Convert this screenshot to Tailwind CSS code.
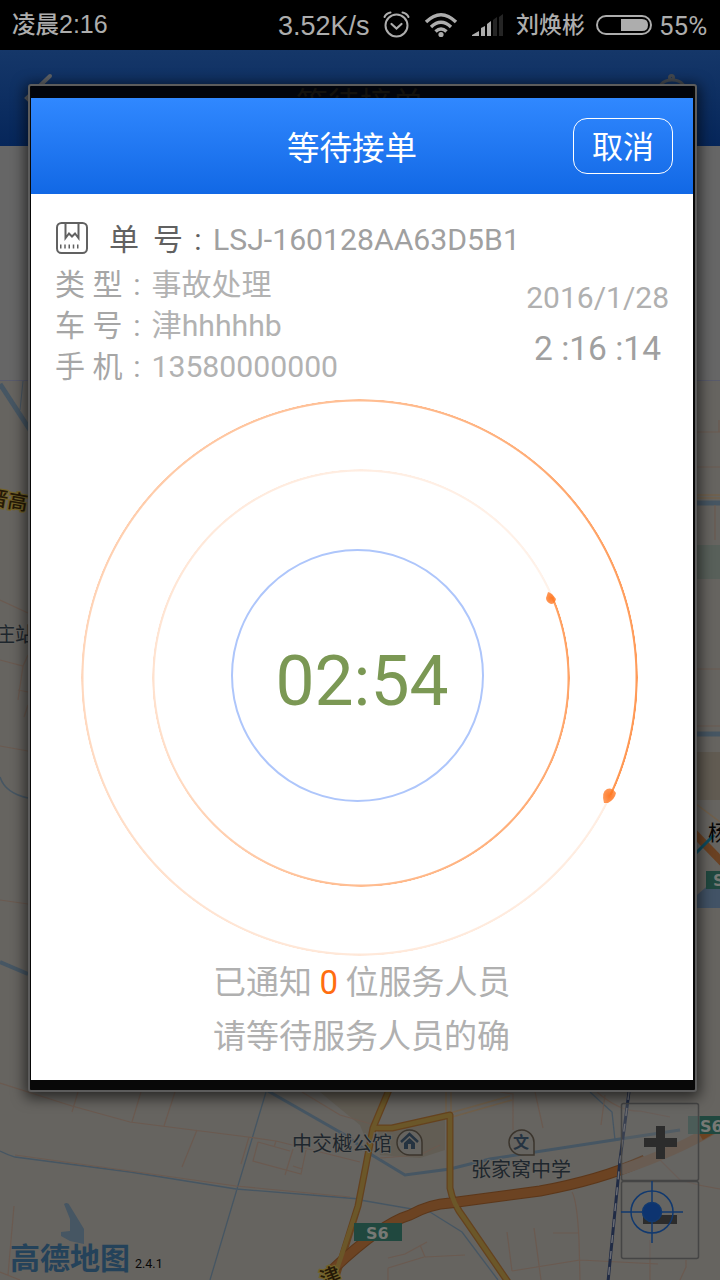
<!DOCTYPE html>
<html lang="zh-CN">
<head>
<meta charset="utf-8">
<title>等待接单</title>
<script src="https://cdn.jsdelivr.net/npm/@tailwindcss/browser@4"></script>
</head>
<body class="bg-black">
<div class="relative flex h-[1280px] w-[720px] flex-col overflow-hidden bg-[#666460] font-['Roboto','Noto_Sans_CJK_SC',sans-serif]">

  <!-- Status bar -->
  <div class="flex h-[50px] shrink-0 items-center bg-black pl-3 text-[25px] leading-none text-[#adadad]">
    <span class="w-[266px] shrink-0 font-['Liberation_Sans','Noto_Sans_CJK_SC',sans-serif] font-medium whitespace-nowrap"><span class="text-[23.500px]">凌晨</span>2:16</span>
    <span class="w-[105px] shrink-0 pt-[2px] font-['Liberation_Sans',sans-serif] text-[27px]">3.52K/s</span>
    <svg class="h-[30px] w-[28px] shrink-0" viewBox="0 0 28 30" fill="none" stroke="#adadad" stroke-width="2" stroke-linecap="round">
      <circle cx="13.5" cy="15.5" r="11"/><path d="M8.500 14l5 4.500 5-4.500" stroke-width="2.200"/><path d="M1.500 7Q3 3.500 7.500 2.500M25.500 7Q24 3.500 19.500 2.500"/>
    </svg>
    <svg class="ml-[13px] h-[26px] w-[34px] shrink-0" viewBox="0 0 34 26" fill="none" stroke="#adadad" stroke-width="3.400">
      <path d="M2 10Q17-4.500 32 10M7 15Q17 5.500 27 15M11.500 19.500Q17 14.500 22.500 19.500"/><circle cx="17" cy="22.500" r="2.600" fill="#adadad" stroke="none"/>
    </svg>
    <svg class="ml-[14px] h-[24px] w-[32px] shrink-0" viewBox="0 0 32 24" fill="#adadad">
      <path d="M0 23v-1l7-4v5zM9 15l4-2v10H9zM15 11l4-3v15h-4z"/><path d="M21 7l4-3v19h-4zM27 4l4-3v22h-4z" fill="#252525"/>
    </svg>
    <span class="ml-[12px] w-[80px] shrink-0 text-[23px] font-medium whitespace-nowrap">刘焕彬</span>
    <svg class="h-[20px] w-[56px] shrink-0" viewBox="0 0 56 20"><rect x="1" y="1" width="54" height="18" rx="9" fill="none" stroke="#adadad" stroke-width="2"/><path d="M25 4h21q6 0 6 6t-6 6H25z" fill="#adadad"/></svg>
    <span class="ml-[7px] pt-[2px] text-[26px]">55%</span>
  </div>

  <!-- Dimmed page header -->
  <div class="relative h-24 shrink-0 bg-linear-to-b from-[#153769] to-[#06265a]">
    <svg class="block h-24 w-[720px]" viewBox="0 50 720 96" fill="none" stroke="#606367" stroke-width="4" stroke-linecap="round"><path d="M50 76L27 98l23 22"/><g stroke="#454a50" stroke-width="3"><path d="M658 98q-1-18 14-18t14 18"/><circle cx="671.500" cy="77.500" r="2"/></g></svg>
  </div>
  <div class="h-[234px] shrink-0 bg-[#666]"></div>

  <!-- Dimmed map -->
  <svg class="block h-[900px] w-[720px] shrink-0" viewBox="0 380 720 900" fill="none" font-family="Noto Sans CJK SC, sans-serif">
    <path d="M0 380.500H720" stroke="#595b6b"/>
    <g stroke="#465663">
      <path d="M0 384L30 430" stroke-width="5"/><path d="M23 381L20 410"/><path d="M0 777Q5 793 28 798" stroke-width="1.500"/>
      <path d="M0 962L28 974" stroke-width="4"/><path d="M690 503H720M690 734H720" stroke-width="5"/>
      <path d="M0 1151Q8 1155 15 1157L130 1172 236 1189 360 1199M266 1092L237 1189 210 1280" stroke-width="1.300"/>
      <path d="M268 1091L345 1135 372 1155 405 1175 450 1169 490 1159 620 1139 680 1130" stroke-width="3"/>
      <path d="M590 1092L612 1112 615 1140M360 1200L430 1212 462 1232 498 1280" stroke-width="1.300"/>
    </g>
    <path d="M690 545H720V579H690z" fill="#58605a"/>
    <path d="M690 752H720V800H690z" fill="#615b52"/>
    <path d="M697 895L712 882 720 880V908H697z" fill="#425366"/>
    <path d="M64 1204q4-3 6 2l14 23v15l-14-3-9-5v-4l9-1v-12z" fill="#465663"/>
    <path d="M320 1092H384L370 1150 360 1125z" fill="#625d54"/>
    <path d="M378 1130L445 1118V1150L420 1158 380 1155z" fill="#625d54"/>
    <g stroke="#6b5a50" stroke-width="1.200">
      <path d="M0 600L28 613M0 660L23 666 28 655M23 666L18 700M18 690L28 692M0 746L28 751M0 900L28 904M24 717L28 705"/>
      <path d="M690 432H720M690 467H720M690 669H720M690 726H720M715 505V540M719 420V432"/>
      <path d="M0 1083L72 1106 130 1122 248 1137 276 1141 360 1162M78 1092L72 1112M141 1092L132 1122M175 1092L164 1126M197 1130L182 1167M249 1137L241 1164M258 1142L290 1151M258 1142L253 1161 301 1174 306 1150M293 1149L285 1175M276 1141L274 1147M293 1166L302 1169M15 1155L130 1171 236 1186 350 1197M14 1206L8 1275M0 1272L20 1280M302 1092L340 1115 375 1125"/>
      <path d="M500 1092L513 1094V1130M535 1092L543 1128M597 1092Q620 1112 640 1111L670 1117M605 1095L601 1125M388 1258L405 1254 427 1242M420 1245L425 1257 465 1255M388 1268L424 1257M388 1268V1280M507 1232L512 1271M534 1228L541 1280M553 1233H579M512 1271L580 1260 658 1264M572 1192Q577 1200 579 1240L580 1280M650 1280V1240M686 1260V1267L680 1280M380 1158L420 1155 440 1145"/>
      <path d="M655 1155L680 1180Q700 1186 720 1189"/>
    </g>
    <g stroke="#71604b" stroke-width="1.500"><path d="M446 1092V1115M451 1092V1115M450 1113L510 1096M452 1117L512 1100M690 495H720M690 498H720M696 804L720 822"/></g>
    <g stroke-linejoin="round">
      <path d="M391 1085L373 1128 366 1165 358 1206 335 1280M373 1128H392L450 1115V1188Q453 1204 464 1218L508 1282" stroke="#65421e" stroke-width="7"/>
      <path d="M330 1272Q380 1224 410 1215Q430 1204 450 1203L540 1191Q600 1180 645 1160" stroke="#5c371a" stroke-width="11"/>
      <path d="M330 1272Q380 1224 410 1215Q430 1204 450 1203L540 1191Q600 1180 645 1160" stroke="#6c4322" stroke-width="9"/>
      <path d="M621 1170Q680 1150 720 1125" stroke="#6b5747" stroke-width="10"/><path d="M701 1137L720 1126" stroke="#6c4322" stroke-width="7"/>
      <path d="M391 1085L373 1128 366 1165 358 1206 335 1275M373 1128H392L450 1115V1188Q453 1204 464 1218L508 1282" stroke="#6b5729" stroke-width="4.500"/>
    </g>
    <path d="M690 829L724 864" stroke="#6a4122" stroke-width="8"/><path d="M696 853L714 835" stroke="#0e4d61" stroke-width="3"/>
    <path d="M629 1092L620 1160 608 1282" stroke="#202b45" stroke-width="3"/><path d="M629 1092L620 1160 608 1282" stroke="#6a6c73" stroke-width="1.500" stroke-dasharray="8 8"/>
    <g stroke="#746329" stroke-width="2.500" paint-order="stroke" fill="#251907" font-weight="500" font-size="20"><text x="-12" y="506" transform="rotate(10 0 500)">晋高</text><text x="320" y="1283" transform="rotate(-22 331 1276)">津</text></g>
    <g fill="#1e262d" stroke="#686662" stroke-width="2" paint-order="stroke" font-size="20">
      <text x="-5" y="642">庄站</text><text x="292" y="1151">中交樾公馆</text><text x="471" y="1177">张家窝中学</text>
    </g>
    <text x="708" y="840" font-size="21" fill="#050505">杨</text>
    <g fill="#666460" stroke="#3b352d" stroke-width="1.500">
      <path d="M422 1155H410a12.500 12.500 0 1 1 12-12zM534 1155H521a12.500 12.500 0 1 1 13-12z" />
    </g>
    <path d="M401 1142L409.500 1134 418 1142" stroke="#253341" stroke-width="2.500"/><path d="M404 1143L409.500 1138 415 1143V1149H411V1144H408V1149H404z" fill="#253341"/>
    <text x="513" y="1148" font-size="16" font-weight="700" fill="#253341">文</text>
    <g fill="#20483f"><path d="M354 1223H402V1241H354zM706 871H720V889H706z"/><path d="M688 1116H720V1134H688z" fill="#3c5751"/><path d="M700 1116H720V1134H700z"/></g>
    <g fill="#777975" font-family="DejaVu Sans" font-weight="700" font-size="16"><text x="366" y="1239">S6</text><text x="700" y="1132">S6</text><text x="713" y="886">S</text></g>
    <text x="10" y="1269" font-size="30" font-weight="700" fill="#24425a">高德地图</text>
    <text x="135" y="1268" font-family="Roboto" font-size="12.500" fill="#080808">2.4.1</text>
    <!-- Zoom and locate controls -->
    <g fill="#666" fill-opacity=".35" stroke="#454545" stroke-width="1.500"><rect x="621.500" y="1103.500" width="77" height="77" rx="2"/><rect x="621.500" y="1181.500" width="77" height="77" rx="2"/></g>
    <path d="M656 1126H665V1138H677V1147H665V1159H656V1147H644V1138H656zM643 1215H677V1224H643z" fill="#2c2c2c"/>
    <g stroke="#11396f" stroke-width="1.500"><circle cx="652" cy="1212" r="21"/><path d="M621 1212H683M652 1181V1243"/><circle cx="652" cy="1212" r="9.500" fill="#0d3470"/></g>
  </svg>

  <!-- Order dialog, floating over the page -->
  <div class="absolute top-[84px] left-[28px] flex h-[1008px] w-[669px] flex-col rounded-[3px] border-2 border-[#5c5c5c] bg-[#080808] pr-[2px] pl-px shadow-[0_3px_14px_3px_rgba(0,0,0,0.6)]">
    <div class="h-3 shrink-0 overflow-hidden bg-[#02040a] text-center text-[32px] leading-[32px] text-[#12110d]"><span class="inline-block pt-[2px] pr-1">等待接单</span></div>
    <header class="grid h-24 shrink-0 grid-cols-[1fr_auto_1fr] items-center bg-linear-to-b from-[#3088ff] to-[#1168e5] pr-5 text-white">
      <span></span>
      <h1 class="pt-[6px] text-[32.500px] leading-none">等待接单</h1>
      <button class="ml-auto h-14 w-[100px] rounded-[14px] border border-white pt-[2px] text-[31px] leading-none">取消</button>
    </header>
    <main class="flex grow flex-col bg-white text-[30px] text-[#b0b0b0]">
      <div class="flex h-[71px] items-end pl-[25px] text-[#616161]">
        <svg class="mb-[11px] h-8 w-8 self-end" viewBox="0 0 32 32" fill="none" stroke="#616161" stroke-width="2"><rect x="1" y="1" width="30" height="30" rx="4.500"/><path d="M9.500 1V16L13 11.500 16 14.500 19 11.500 22.500 16V1"/><path d="M4 24.500H23" stroke-width="4" stroke-dasharray="1.500 2.750"/></svg>
        <div class="ml-[21px] flex h-[51px] items-center pt-px leading-none whitespace-pre"><span>单</span><span class="ml-[14px]">号</span><span class="w-[30px] text-center">:</span><span class="pt-px text-[30.200px] text-[#a0a0a0]">LSJ-160128AA63D5B1</span></div>
      </div>
      <div class="flex h-[129px] justify-between pr-6 pl-[24px]">
        <div class="-mt-px flex flex-col text-[#a6a6a6]">
          <div class="flex h-[41px] items-center whitespace-pre">类 型<span class="w-[29px] text-center">:</span><span class="text-[#b2b2b2]">事故处理</span></div>
          <div class="flex h-[41px] items-center whitespace-pre">车 号<span class="w-[29px] text-center">:</span><span class="text-[30.200px] text-[#b2b2b2]">津hhhhhb</span></div>
          <div class="flex h-[41px] items-center whitespace-pre">手 机<span class="w-[29px] text-center">:</span><span class="text-[30.200px] text-[#b2b2b2]">13580000000</span></div>
        </div>
        <div class="flex flex-col items-end pt-[8px]">
          <div class="h-[49px] leading-[49px]">2016/1/28</div>
          <div class="h-[49px] pr-[8px] text-[33.500px] leading-[53px] whitespace-pre text-[#a0a0a0]">2 :16 :14</div>
        </div>
      </div>
      <!-- Countdown rings -->
      <div class="grid h-[566px] shrink-0 place-items-center *:col-start-1 *:row-start-1">
        <div class="mr-[5px] size-[557px] rounded-full bg-[conic-gradient(from_115deg,#ff7a2220,#ff7a2230_25%,#ff7a2258_50%,#ff7a2280_70%,#ff7a22b8_87%,#ff7a22c8)] [mask:radial-gradient(circle,transparent_275.500px,#000_276.500px,#000_278px,transparent_278.700px)]"></div>
        <div class="mt-[2px] mr-[3px] size-[418px] rounded-full bg-[conic-gradient(from_67deg,#ff7a22b8,#ff7a22a0_15%,#ff7a2278_35%,#ff7a2240_50%,#ff7a2228_70%,#ff7a2218)] [mask:radial-gradient(circle,transparent_206px,#000_207px,#000_208.500px,transparent_209.200px)]"></div>
        <div class="mr-[9px] mb-[4px] size-[253px] rounded-full border-2 border-[#aec6fb]"></div>
        <svg class="h-[566px] w-[662px]" viewBox="31 394 662 566">
          <defs><radialGradient id="ember"><stop offset="0" stop-color="#ff7d2c"/><stop offset="1" stop-color="#ff9858"/></radialGradient></defs>
          <path d="M548 592q4 1 8 7-1 5-5 5-5-2-5-6z" fill="url(#ember)"/>
          <path d="M604 803q-3-11 3-14 5-2 9 4-1 6-8 10z" fill="url(#ember)"/>
        </svg>
        <div class="mt-[10px] text-[69.500px] leading-none text-[#7b9854]">02:54</div>
      </div>
      <div class="flex flex-col items-start pl-[182px] text-[33px] whitespace-pre">
        <div class="h-[54px] leading-[46px]">已通知<span class="px-[7.500px] text-[#ff6d10]">0</span>位服务人员</div>
        <div class="h-[54px] leading-[46px]">请等待服务人员的确</div>
      </div>
    </main>
    <div class="h-[10px] shrink-0 bg-[#080808]"></div>
  </div>
</div>
</body>
</html>
